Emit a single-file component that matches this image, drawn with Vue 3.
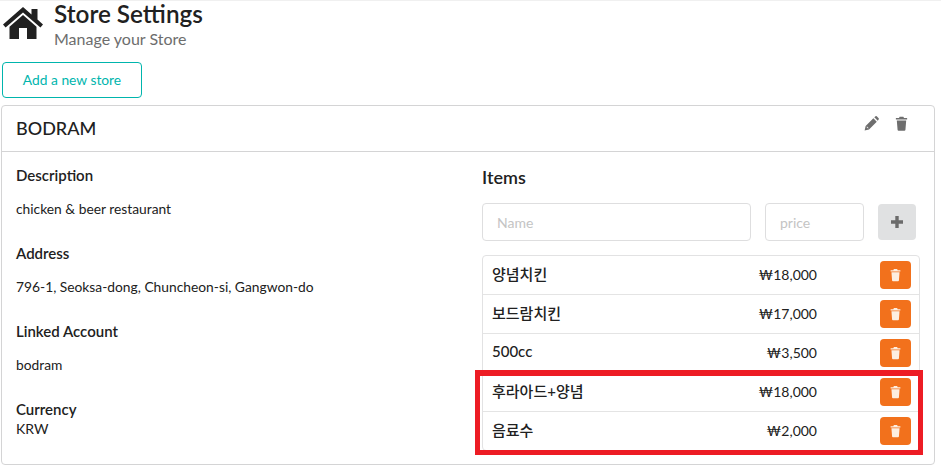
<script setup>
const items = [
  { name: '양념치킨', price: '₩18,000' },
  { name: '보드람치킨', price: '₩17,000' },
  { name: '500cc', price: '₩3,500' },
  { name: '후라아드+양념', price: '₩18,000' },
  { name: '음료수', price: '₩2,000' },
]
const info = [
  { label: 'Description', value: 'chicken & beer restaurant' },
  { label: 'Address', value: '796-1, Seoksa-dong, Chuncheon-si, Gangwon-do' },
  { label: 'Linked Account', value: 'bodram' },
]
const trash = 'M9 1h6l1 2h5v2.600H3V3h5zM4.500 7h15l-1.200 15a1.600 1.600 0 0 1-1.600 1.400H7.300a1.600 1.600 0 0 1-1.600-1.400z'
</script>

<template>
  <div class="page">
    <header class="head">
      <svg class="home" viewBox="0 0 40 32" aria-hidden="true">
        <path fill="#212121" d="M20 0 0 17.500l2.600 3L20 5.400l17.400 15.100 2.600-3-5.500-4.900V2h-6v5.400zM20 8 6.500 19.800V32h9.500V21h8v11h9.500V19.800z" />
      </svg>
      <div class="titles">
        <h1>Store Settings</h1>
        <p>Manage your Store</p>
      </div>
    </header>
    <button class="add"><span>Add a new store</span></button>
    <section class="card">
      <div class="card-top">
        <h2>BODRAM</h2>
        <div class="tools">
          <svg viewBox="0 0 24 24" class="tool" aria-hidden="true">
            <path fill="#6e6e6e" d="M1 23l1.600-7L15 3.600 20.400 9 8 21.400zM4 17.500l2.500 2.500.8-.8-2.500-2.500zM16.500 2l1.900-1.500a1.500 1.500 0 0 1 2 0l3 3a1.500 1.500 0 0 1 0 2L22 7.500z" />
          </svg>
          <svg viewBox="0 0 24 24" class="tool" aria-hidden="true">
            <path fill="#6e6e6e" :d="trash" />
          </svg>
        </div>
      </div>
      <div class="card-body">
        <div class="left">
          <div v-for="row in info" :key="row.label" class="field">
            <h4>{{ row.label }}</h4>
            <p>{{ row.value }}</p>
          </div>
          <div class="field tight">
            <h4>Currency</h4>
            <p>KRW</p>
          </div>
        </div>
        <div class="right">
          <h3>Items</h3>
          <form class="entry" @submit.prevent>
            <input class="in-name" placeholder="Name" />
            <input class="in-price" placeholder="price" />
            <button class="plus" aria-label="Add">
              <svg viewBox="0 0 14 14" aria-hidden="true"><path fill="#6b6b6b" d="M5.300 1h3.400v4.300H13v3.400H8.700V13H5.300V8.700H1V5.300h4.300z" /></svg>
            </button>
          </form>
          <ul class="list">
            <li v-for="item in items" :key="item.name">
              <span class="name">{{ item.name }}</span>
              <span class="price">{{ item.price }}</span>
              <button class="del" aria-label="Delete">
                <svg viewBox="0 0 24 24" aria-hidden="true"><path fill="#fdeee0" :d="trash" /></svg>
              </button>
            </li>
          </ul>
        </div>
      </div>
    </section>
    <div class="highlight"></div>
  </div>
</template>

<style>
html, body { margin: 0; background: #fff; }
</style>

<style scoped>
.page {
  position: relative;
  width: 941px;
  height: 470px;
  overflow: hidden;
  box-sizing: border-box;
  padding: 1px 6px 0 1px;
  border-top: 1px solid #f0f0f0;
  font-family: Lato, "Noto Sans CJK KR", sans-serif;
  font-size: 14px;
  color: #212121;
}
.head { display: flex; gap: 11px; height: 60px; padding-left: 2px; }
.home { width: 40px; height: 32px; margin-top: 5px; flex: none; }
.titles { margin-top: -3px; }
h1 { margin: 0; font-size: 24.300px; font-weight: 600; line-height: 30px; color: #212121; }
.titles p { margin: 0; font-size: 16px; line-height: 20px; color: #6d6d6d; }
.add {
  display: block;
  width: 140px;
  height: 36px;
  margin-left: 1px;
  padding: 0 0 2px;
  background: #fff;
  border: 1px solid #00b5ad;
  border-radius: 4px;
  color: #00b5ad;
  font: 13.800px Lato, sans-serif;
}
.card {
  margin-top: 7px;
  height: 360px;
  box-sizing: border-box;
  border: 1px solid #d4d4d5;
  border-radius: 4px;
}
.card-top {
  height: 46px;
  box-sizing: border-box;
  border-bottom: 1px solid #d4d4d5;
  padding: 0 14px;
  display: flex;
  align-items: center;
  justify-content: space-between;
}
h2 { margin: 0 0 1px; font-size: 18px; font-weight: 500; }
.tools { display: flex; gap: 15px; margin-top: -11px; padding-right: 11px; }
.tool { width: 15px; height: 15px; display: block; }
.card-body { display: flex; padding: 13px 14px 0; }
.left { width: 466px; }
.field { height: 78px; }
.field h4 { margin: 0; font-size: 15px; font-weight: 600; line-height: 20px; }
.field p { margin: 14px 0 0; font-size: 13.800px; line-height: 20px; }
.field.tight p { margin-top: 0; line-height: 19px; font-size: 14px; }
.right { width: 438px; }
h3 { margin: 0 0 14px; font-size: 18px; font-weight: 600; line-height: 24px; }
.entry { display: flex; align-items: center; }
input {
  box-sizing: border-box;
  height: 38px;
  border: 1px solid #dededf;
  border-radius: 4px;
  padding: 0 14px;
  font: 14px Lato, sans-serif;
  outline: none;
}
input::placeholder { color: #c4c4c4; }
.in-name { width: 269px; }
.in-price { width: 99px; margin-left: 14px; }
.plus {
  width: 38px;
  height: 36px;
  margin-left: 14px;
  border: 0;
  padding: 0;
  border-radius: 4px;
  background: #e0e1e2;
  display: flex;
  align-items: center;
  justify-content: center;
}
.plus svg { width: 14px; height: 14px; }
.list {
  list-style: none;
  margin: 14px 0 0;
  padding: 0;
  border: 1px solid #e2e2e3;
  border-radius: 4px;
  width: 438px;
  box-sizing: border-box;
}
li {
  display: flex;
  align-items: center;
  height: 39px;
  box-sizing: border-box;
  padding: 0 8px 0 9px;
  border-top: 1px solid #e4e4e4;
}
li:first-child { border-top: 0; height: 38px; }
.name { width: 200px; font-size: 15px; font-weight: 500; margin-bottom: 4px; }
.price { width: 125px; text-align: right; font-size: 14px; margin-bottom: 2px; }
.del {
  width: 31px;
  height: 28px;
  margin-left: 63px;
  padding: 0;
  border: 0;
  border-radius: 4px;
  background: #f2711c;
  display: flex;
  align-items: center;
  justify-content: center;
}
.del svg { width: 13px; height: 14px; }
.highlight {
  position: absolute;
  left: 475px;
  top: 369px;
  width: 448px;
  height: 85px;
  box-sizing: border-box;
  border: 5px solid #ed1c24;
  border-top-width: 6px;
  pointer-events: none;
}
</style>
